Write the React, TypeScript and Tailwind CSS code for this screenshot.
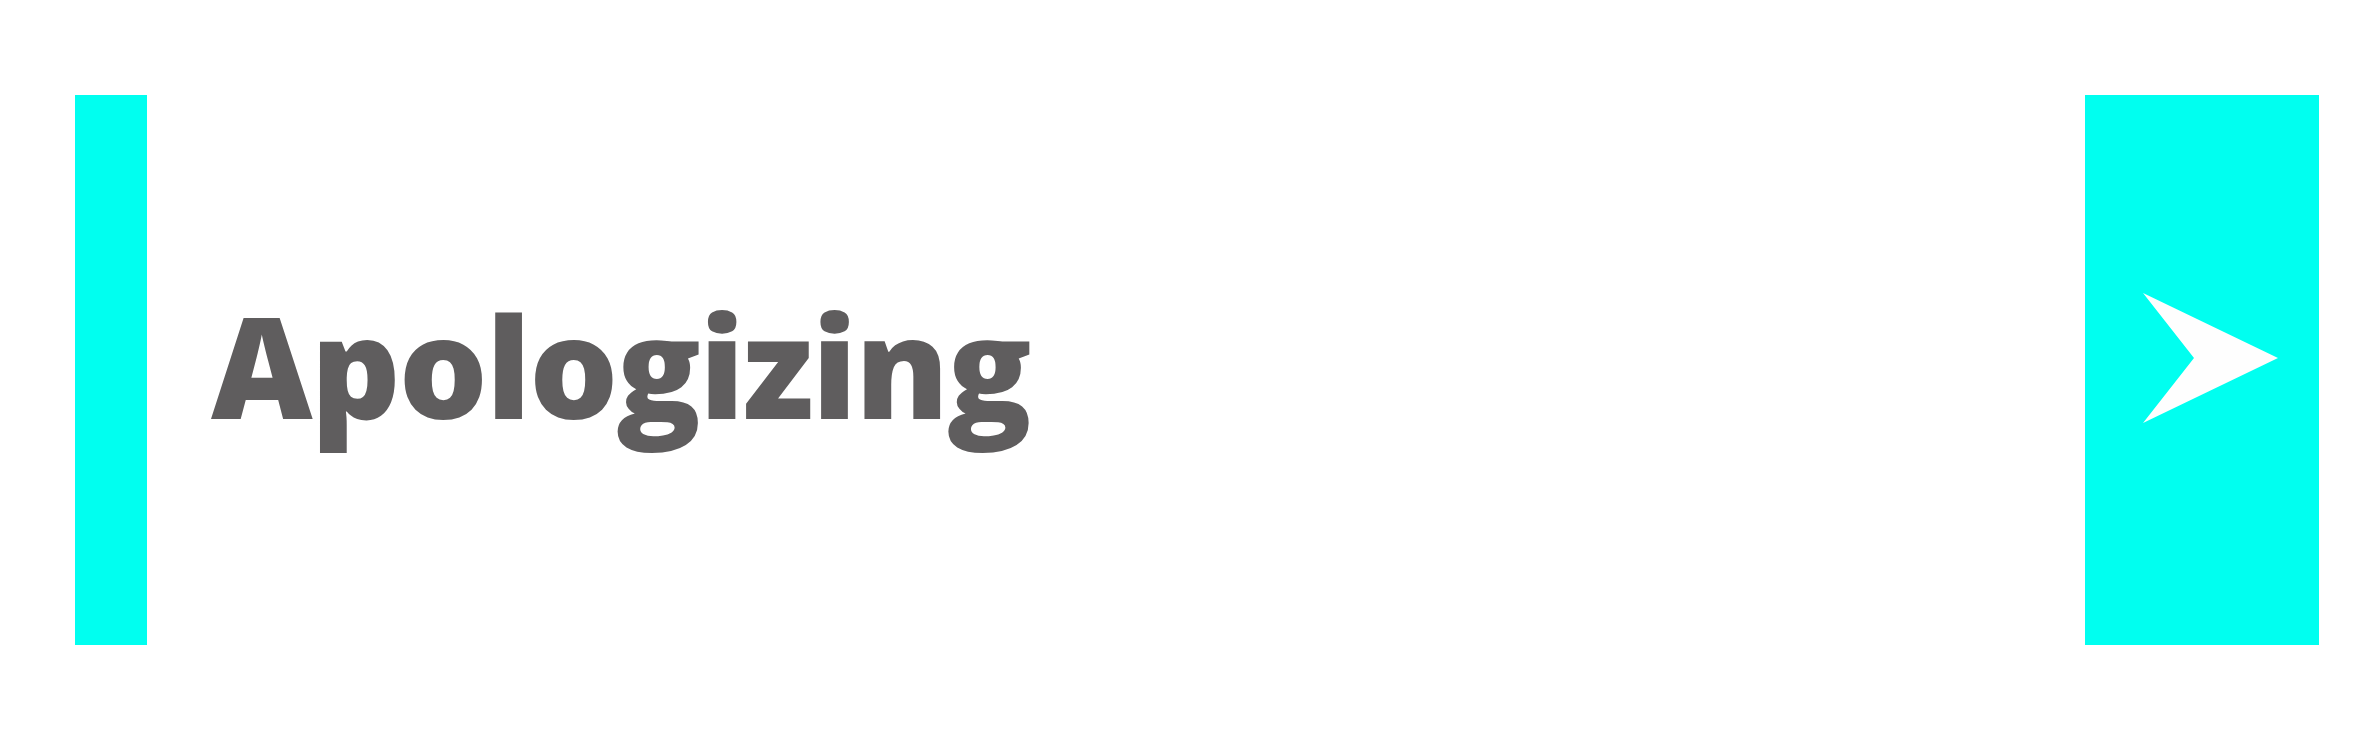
export default function App() {
  return (
    <div className="flex h-[755px] w-[2379px] bg-white pt-[95px] pb-[110px] pl-[75px] pr-[60px]">
      <div className="flex h-[550px] flex-1 items-center">
        <div className="h-full w-[72px] bg-[#00fff0]" />
        <h1
          className="mb-[10px] ml-[64px] flex-1 text-[140px] font-extrabold leading-none tracking-[-2px] text-[#5f5d5e] [font-stretch:90%]"
          style={{ fontFamily: '"Open Sans", sans-serif' }}
        >
          Apologizing
        </h1>
        <div className="h-full w-[234px] cursor-pointer bg-[#00fff0] pt-[198px] pl-[58px]" role="button" aria-label="Next">
          <svg width="135" height="130" viewBox="0 0 135 130" className="block">
            <polygon points="0,0 135,65 0,130 51,65" fill="#fefefe" />
          </svg>
        </div>
      </div>
    </div>
  );
}
